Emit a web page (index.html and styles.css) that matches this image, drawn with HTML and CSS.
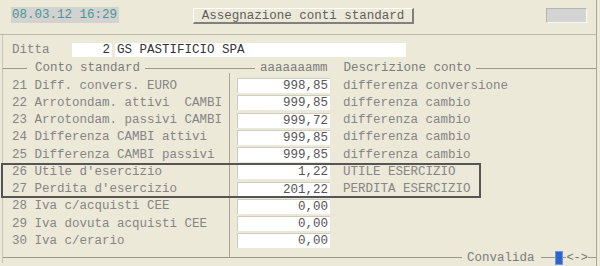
FILE: index.html
```html
<!DOCTYPE html>
<html lang="it">
<head>
    <meta charset="UTF-8">
    <title>Assegnazione conti standard</title>
    <link rel="stylesheet" href="styles.css">
</head>
<body>
<div class="window">
    <!-- barra superiore -->
    <div class="topbar">
        <div class="clock">08.03.12 16:29</div>
        <div class="title-btn">Assegnazione conti standard</div>
        <div class="spacer"></div>
        <div class="indicator"></div>
    </div>

    <div class="content">
        <div class="ditta">
            <span class="ditta-label">Ditta</span>
            <span class="box box-code">2</span>
            <span class="box box-name">GS PASTIFICIO SPA</span>
        </div>

        <!-- intestazione gruppo -->
        <div class="legend">
            <span class="rule rule-start"></span>
            <span class="legend-text">Conto standard</span>
            <span class="rule rule-mid"></span>
            <span class="legend-text">aaaaaaamm</span>
            <span class="legend-text legend-desc">Descrizione conto</span>
            <span class="rule rule-end"></span>
        </div>

        <div class="rows">
            <div class="row"><span class="label">21 Diff. convers. EURO</span><span class="val">998,85</span><span class="desc">differenza conversione</span></div>
            <div class="row"><span class="label">22 Arrotondam. attivi  CAMBI</span><span class="val">999,85</span><span class="desc">differenza cambio</span></div>
            <div class="row"><span class="label">23 Arrotondam. passivi CAMBI</span><span class="val">999,72</span><span class="desc">differenza cambio</span></div>
            <div class="row"><span class="label">24 Differenza CAMBI attivi</span><span class="val">999,85</span><span class="desc">differenza cambio</span></div>
            <div class="row"><span class="label">25 Differenza CAMBI passivi</span><span class="val">999,85</span><span class="desc">differenza cambio</span></div>
            <div class="hl">
                <div class="row"><span class="label">26 Utile d'esercizio</span><span class="val">1,22</span><span class="desc">UTILE ESERCIZIO</span></div>
                <div class="row"><span class="label">27 Perdita d'esercizio</span><span class="val">201,22</span><span class="desc">PERDITA ESERCIZIO</span></div>
            </div>
            <div class="row"><span class="label">28 Iva c/acquisti CEE</span><span class="val">0,00</span></div>
            <div class="row"><span class="label">29 Iva dovuta acquisti CEE</span><span class="val">0,00</span></div>
            <div class="row"><span class="label">30 Iva c/erario</span><span class="val">0,00</span></div>
        </div>

        <!-- piede gruppo -->
        <div class="footer">
            <span class="rule rule-fill"></span>
            <span class="legend-text">Convalida</span>
            <span class="rule rule-short"></span>
            <span class="slider"></span>
            <span class="rule rule-tiny"></span>
            <span class="arrows">&lt;-&gt;</span>
            <span class="rule rule-last"></span>
        </div>
    </div>
</div>
</body>
</html>
```

FILE: styles.css
```css
body {
    margin: 0;
    width: 600px;
    height: 266px;
    overflow: hidden;
    background: #ece9d8;
    font-family: "Liberation Mono", "Courier New", monospace;
    font-size: 12.5px;
    color: #858585;
}
.window {
    width: 597px;
    height: 266px;
    border-right: 1px solid #a9a698;
    box-sizing: border-box;
}

/* barra superiore */
.topbar {
    height: 35px;
    display: flex;
    align-items: flex-start;
    padding-top: 7px;
    border-bottom: 1px solid #bcb9aa;
    box-sizing: border-box;
}
.clock {
    margin-left: 11px;
    width: 108px;
    height: 16px;
    line-height: 16px;
    padding-left: 1px;
    box-sizing: border-box;
    background: #d2d2d0;
    color: #4a9696;
}
.title-btn {
    margin-left: 74px;
    margin-top: 1px;
    width: 221px;
    height: 16px;
    line-height: 14px;
    text-align: center;
    box-sizing: border-box;
    color: #5e5e5e;
    border-top: 1px solid #fff;
    border-left: 1px solid #fff;
    border-right: 2px solid #808080;
    border-bottom: 2px solid #808080;
}
.spacer {
    flex: 1;
}
.indicator {
    margin-top: 1px;
    margin-right: 9px;
    width: 41px;
    height: 15px;
    box-sizing: border-box;
    background: #d4d4d4;
    border-top: 1px solid #b8b6aa;
    border-left: 1px solid #b8b6aa;
    border-right: 1px solid #f8f8f4;
    border-bottom: 1px solid #f8f8f4;
}

/* contenuto */
.content {
    margin-left: 2px;
    border-left: 1px solid #c9c6b6;
}
.ditta {
    display: flex;
    align-items: center;
    padding-top: 8px;
    padding-left: 9px;
    height: 14px;
    box-sizing: content-box;
}
.ditta-label {
    width: 60px;
}
.box {
    height: 14px;
    line-height: 14px;
    background: #fff;
    color: #333;
    box-sizing: border-box;
}
.box-code {
    width: 40px;
    text-align: right;
    padding-right: 2px;
}
.box-name {
    margin-left: 3px;
    width: 291px;
    padding-left: 2px;
}

/* linee di gruppo */
.legend, .footer {
    display: flex;
    align-items: center;
    height: 10px;
    color: #7c7c7c;
}
.legend {
    margin-top: 6px;
}
.rule {
    height: 0;
    border-top: 1px solid #9a988c;
}
.rule-start {
    width: 24px;
    margin-right: 8px;
}
.legend-text {
    white-space: pre;
}
.rule-mid {
    width: 110px;
    margin: 0 5px;
}
.legend-desc {
    margin-left: 16px;
}
.rule-end {
    flex: 1;
    margin-left: 5px;
}

/* righe */
.rows {
    padding: 4px 0 8px;
    background: linear-gradient(#a9a698, #a9a698) no-repeat 226px 0 / 1px 100%;
}
.row {
    display: flex;
    align-items: center;
    height: 17.25px;
}
.label {
    width: 226px;
    padding-left: 9px;
    box-sizing: border-box;
    white-space: pre;
}
.val {
    margin-left: 8px;
    width: 93px;
    height: 15px;
    line-height: 14px;
    padding-right: 2px;
    text-align: right;
    box-sizing: border-box;
    background: #fff;
    color: #555;
    border-top: 1px solid #cfccbe;
    border-left: 1px solid #cfccbe;
}
.desc {
    margin-left: 13px;
    white-space: pre;
}
.hl {
    width: 480px;
    margin-left: -2px;
    padding-left: 2px;
    box-sizing: border-box;
    outline: 2px solid #555;
    outline-offset: -2px;
}

/* piede */
.footer {
    margin-top: -5px;
}
.rule-fill {
    flex: 1;
}
.footer .legend-text {
    margin: 0 7px 0 5px;
}
.rule-short {
    width: 14px;
}
.slider {
    width: 8px;
    height: 14px;
    box-sizing: border-box;
    background: #2f63cc;
    border: 1px solid #6f95df;
}
.rule-tiny {
    width: 3px;
}
.arrows {
    font-size: 12px;
    color: #777;
}
.rule-last {
    width: 8px;
}
```
